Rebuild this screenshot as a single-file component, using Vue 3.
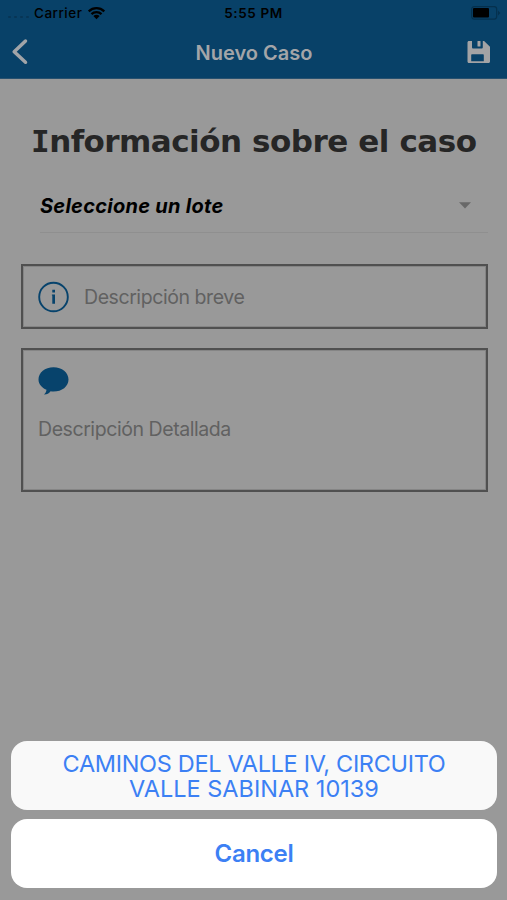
<script setup>
const title = 'Nuevo Caso'
const options = ['CAMINOS DEL VALLE IV, CIRCUITO VALLE SABINAR 10139']
</script>

<template>
  <div class="screen">
    <header class="header">
      <div class="status">
        <div class="carrier">
          <span class="signal"><i v-for="n in 4" :key="n"></i></span>
          <span class="carrier-name">Carrier</span>
          <svg class="wifi" viewBox="0 0 20 14" width="19" height="14">
            <path d="M1.8 5.2C6.5.9 13.5.9 18.2 5.2M4.7 8.2c3-2.8 7.6-2.8 10.6 0" fill="none" stroke="#000" stroke-width="2.4" />
            <path d="M10 13.6 6.7 10.2c1.9-1.7 4.7-1.7 6.6 0z" fill="#000" />
          </svg>
        </div>
        <span class="time">5:55 PM</span>
        <svg class="battery" viewBox="0 0 30 14" width="30" height="14">
          <rect x=".7" y=".7" width="25" height="12.4" rx="2.5" fill="none" stroke="#05304d" stroke-width="1.2" />
          <rect x="2" y="2" width="16" height="9.6" rx="1" fill="#000" />
          <path d="M27 4.5 29.3 7 27 9.5z" fill="#05304d" />
        </svg>
      </div>
      <nav class="nav">
        <svg class="back" viewBox="0 0 18 28" width="18" height="28">
          <path d="M14.5 3 3.2 13.8 14.5 24.2" fill="none" stroke="#a1a4a8" stroke-width="3.5" stroke-linecap="round" stroke-linejoin="round" />
        </svg>
        <h1 class="title">{{ title }}</h1>
        <svg class="save" viewBox="0 0 24 24" width="24" height="24">
          <path fill-rule="evenodd" fill="#a3a3a5" d="M2 1h3v6.2c0 .8.5 1.3 1.3 1.3h8.2c.8 0 1.3-.5 1.3-1.3V1h1.3L23 6.8V21.500c0 .9-.6 1.500-1.500 1.500H2C1.100 23 .5 22.400.5 21.500V2.500C.5 1.600 1.100 1 2 1zM5.200 14.200h10.600c.6 0 1 .4 1 1v6H4.200v-6c0-.6.4-1 1-1z" />
          <rect x="10.500" y="1" width="3" height="5.500" rx=".5" fill="#a3a3a5" />
        </svg>
      </nav>
    </header>

    <main class="form">
      <h2 class="heading"><span class="initial">I</span>nformación sobre el caso</h2>
      <div class="select">
        <span class="select-text">Seleccione un lote</span>
        <svg class="caret" viewBox="0 0 12 7" width="12" height="7"><path d="M0 .2h12L6 6.500z" fill="#686868" /></svg>
      </div>
      <div class="field brief">
        <svg viewBox="0 0 32 32" width="32" height="32">
          <circle cx="15.500" cy="16" r="14.300" fill="none" stroke="#07436c" stroke-width="1.900" />
          <path d="M14.300 8.700h2.700v2.700h-2.700zM13.900 13.500H17V22.800h-2.700v-8.200h-.4z" fill="#07436c" />
        </svg>
        <span class="placeholder brief-text">Descripción breve</span>
      </div>
      <div class="field detail">
        <svg viewBox="0 0 32 30" width="32" height="30">
          <path d="M15.500 1.200c8.500 0 15 5.300 15 12.200s-6.500 12.100-15 12.100c-1 0-2-.1-2.900-.2C10.800 27.500 9 28.700 6 28.600c1.500-1.400 2.200-2.700 2.500-4.800C3.700 21.700.5 17.900.5 13.400.5 6.500 7 1.200 15.500 1.200z" fill="#07436c" />
        </svg>
        <span class="placeholder detail-text">Descripción Detallada</span>
      </div>
    </main>

    <div class="sheet">
      <button v-for="option in options" :key="option" class="action option"><span class="option-text">{{ option }}</span></button>
      <button class="action cancel"><span class="cancel-text">Cancel</span></button>
    </div>
  </div>
</template>

<style>
body { margin: 0; background: #999; }
</style>

<style scoped>
* { box-sizing: border-box; }
.screen {
  width: 507px;
  height: 900px;
  display: flex;
  flex-direction: column;
  overflow: hidden;
  background: #999;
  font-family: Inter, "Liberation Sans", sans-serif;
}
svg { display: block; flex: none; }
.header { height: 79px; flex: none; background: #084168; border-bottom: 1px solid #28516f; }
.status {
  height: 26px;
  display: grid;
  grid-template-columns: 1fr auto 1fr;
  align-items: center;
  padding: 0 8px;
  color: #000;
  font-size: 13.500px;
  font-weight: 500;
}
.carrier { display: flex; align-items: center; }
.signal { display: flex; gap: 3px; width: 26px; padding-top: 7px; }
.signal i { width: 3px; height: 2px; border-radius: 1px; background: #073555; }
.carrier-name { letter-spacing: 0.500px; }
.wifi { margin-left: 5px; }
.time { font-weight: 600; letter-spacing: 0.600px; }
.battery { justify-self: end; margin-right: -2px; }
.nav { height: 51px; display: grid; grid-template-columns: 1fr auto 1fr; align-items: center; padding: 0 16px 0 11px; }
.title { margin: 2px 0 0 6px; color: #a3a5a8; font-size: 20px; font-weight: 600; }
.save { justify-self: end; }
.form { display: flex; flex-direction: column; padding: 41px 19px 0 21px; }
.heading {
  margin: 0 0 0 12px;
  height: 42px;
  line-height: 42px;
  white-space: nowrap;
  color: #262626;
  font-family: "DejaVu Sans", sans-serif;
  font-size: 31px;
  font-weight: 700;
  letter-spacing: -0.540px;
  word-spacing: 0.400px;
}
.initial { font-family: "DejaVu Sans Mono", monospace; margin: 0 0 0 -2px; }
.select {
  height: 71px;
  margin-left: 19px;
  padding: 17px 17px 0 0;
  display: flex;
  align-items: center;
  justify-content: space-between;
  border-bottom: 1px solid #8f8f8f;
}
.select-text { padding-top: 1px; color: #000; font-size: 20px; font-style: italic; font-weight: 700; letter-spacing: 0.270px; }
.field { width: 467px; border: 2px solid #505050; box-shadow: inset 0 0 0 1px #858585; }
.brief { height: 65px; margin-top: 31px; padding-left: 15px; display: flex; align-items: center; gap: 14px; }
.detail { height: 144px; margin-top: 19px; padding: 16px 0 0 15px; display: flex; flex-direction: column; gap: 20px; }
.placeholder { color: #616161; font-size: 19.500px; line-height: 26px; white-space: nowrap; align-self: flex-start; letter-spacing: -0.430px; }
.brief .placeholder { align-self: center; }
.sheet { margin: auto 10px 12.400px 11px; display: flex; flex-direction: column; gap: 9.600px; }
.action {
  height: 68.400px;
  padding: 0;
  border: 0;
  border-radius: 16px;
  background: #fff;
  color: #3c80f4;
  font-family: inherit;
  display: flex;
  align-items: center;
  justify-content: center;
}
.option { background: #f9f9f9; font-size: 23.500px; line-height: 25px; padding: 1px 45px 0; }
.option-text { display: block; }
.option-text::first-line { letter-spacing: -0.320px; }
.cancel { padding-top: 1px; font-size: 24px; font-weight: 600; letter-spacing: -0.300px; }
</style>
